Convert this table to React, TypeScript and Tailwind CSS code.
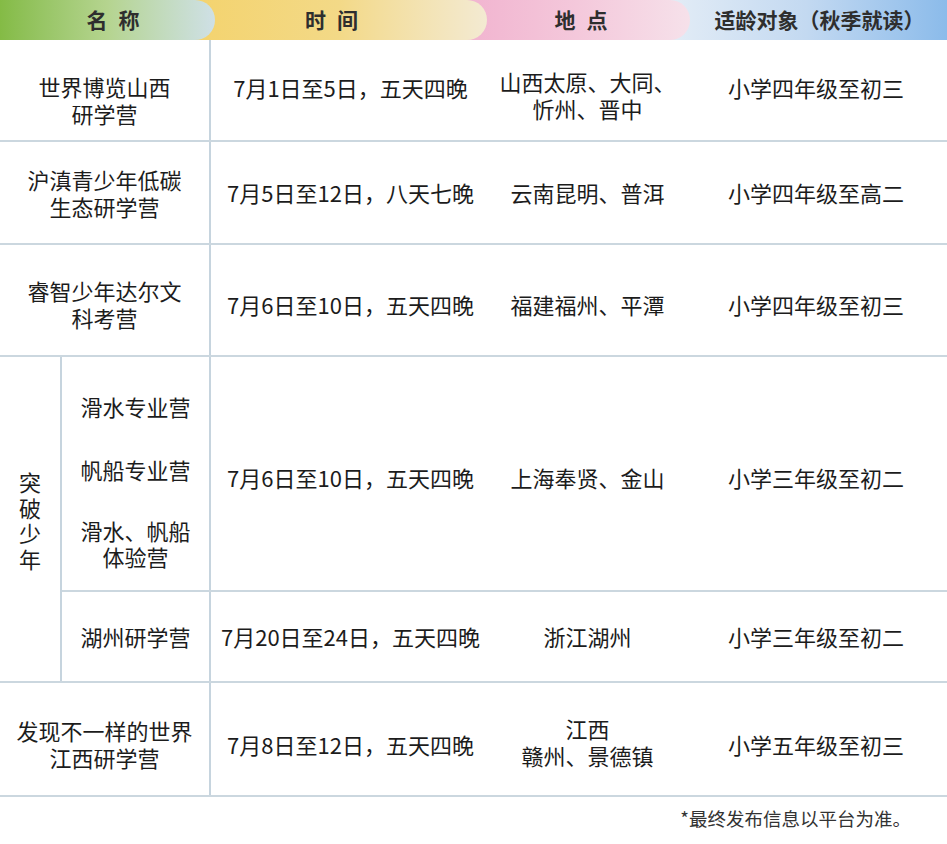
const rows = [
  {
    name: ["世界博览山西", "研学营"],
    time: "7月1日至5日，五天四晚",
    place: ["山西太原、大同、", "忻州、晋中"],
    age: "小学四年级至初三",
    h: "h-[102px]",
    pad: ["pt-[20px]", "pb-[6px]", "pt-[10px]", "pb-[6px]"],
  },
  {
    name: ["沪滇青少年低碳", "生态研学营"],
    time: "7月5日至12日，八天七晚",
    place: ["云南昆明、普洱"],
    age: "小学四年级至高二",
    h: "h-[103px]",
    pad: ["", "", "", ""],
  },
  {
    name: ["睿智少年达尔文", "科考营"],
    time: "7月6日至10日，五天四晚",
    place: ["福建福州、平潭"],
    age: "小学四年级至初三",
    h: "h-[112px]",
    pad: ["pt-[8px]", "pt-[8px]", "pt-[8px]", "pt-[8px]"],
  },
];

function Lines({ items }: { items: string[] }) {
  return (
    <div className="flex flex-col items-center leading-[27px]">
      {items.map((t) => (
        <span key={t}>{t}</span>
      ))}
    </div>
  );
}

function Rest({ time, place, age, pad = ["", "", ""] }: { time: string; place: string[]; age: string; pad?: string[] }) {
  return (
    <>
      <div className={`w-[279px] flex items-center justify-center ${pad[0]}`}>{time}</div>
      <div className={`w-[195px] flex items-center justify-center ${pad[1]}`}>
        <Lines items={place} />
      </div>
      <div className={`flex-1 flex items-center justify-center ${pad[2]}`}>{age}</div>
    </>
  );
}

export default function App() {
  return (
    <div
      className="w-[947px] h-[844px] bg-white text-[#1c1c1c] text-[22px] overflow-hidden"
      style={{ fontFamily: '"Noto Sans CJK SC", "Noto Sans", sans-serif' }}
    >
      {/* header */}
      <div className="flex h-[40px] font-bold text-[21px] text-[#2e2e2e]">
        <div className="relative z-30 w-[215px] rounded-r-[22px] bg-gradient-to-r from-[#84bb45] via-[#b5d48f] to-[#cfe0e6] flex items-center justify-center pl-[22px] tracking-[11px]">
          名称
        </div>
        <div className="relative z-20 -ml-[24px] w-[296px] rounded-r-[22px] bg-gradient-to-r from-[#f4d36d] via-[#f3d987] to-[#f3ead2] flex items-center justify-center pr-[4px] tracking-[11px]">
          时间
        </div>
        <div className="relative z-10 -ml-[24px] w-[227px] rounded-r-[22px] bg-gradient-to-r from-[#f1b3cf] via-[#f4c8db] to-[#f6e1ea] flex items-center justify-center pl-[20px] tracking-[11px]">
          地点
        </div>
        <div className="relative -ml-[24px] flex-1 bg-gradient-to-r from-[#e4edf6] via-[#c3d9f1] to-[#8bbbea] flex items-center justify-center pl-[26px]">
          适龄对象（秋季就读）
        </div>
      </div>

      {rows.map((r) => (
        <div key={r.time} className={`flex border-b-2 border-[#cbd7df] ${r.h}`}>
          <div className={`w-[211px] border-r-2 border-[#c6d4de] flex items-center justify-center ${r.pad[0]}`}>
            <Lines items={r.name} />
          </div>
          <Rest time={r.time} place={r.place} age={r.age} pad={r.pad.slice(1)} />
        </div>
      ))}

      {/* group row */}
      <div className="flex border-b-2 border-[#cbd7df]">
        <div className="w-[62px] border-r-2 border-[#c6d4de] flex items-center justify-center">
          <div className="flex flex-col items-center leading-[25.5px] pt-[2px]">
            <span>突</span>
            <span>破</span>
            <span>少</span>
            <span>年</span>
          </div>
        </div>
        <div className="flex-1 flex flex-col">
          <div className="flex h-[235px] border-b-2 border-[#cbd7df]">
            <div className="w-[149px] border-r-2 border-[#c6d4de] flex flex-col items-center pt-[35px]">
              <span className="leading-[28px]">滑水专业营</span>
              <span className="leading-[28px] mt-[35px]">帆船专业营</span>
              <div className="mt-[34px] flex flex-col items-center leading-[26px]">
                <span>滑水、帆船</span>
                <span>体验营</span>
              </div>
            </div>
            <Rest
              time="7月6日至10日，五天四晚"
              place={["上海奉贤、金山"]}
              age="小学三年级至初二"
              pad={["pt-[8px]", "pt-[8px]", "pt-[8px]"]}
            />
          </div>
          <div className="flex h-[89px]">
            <div className="w-[149px] border-r-2 border-[#c6d4de] flex items-center justify-center">湖州研学营</div>
            <Rest time="7月20日至24日，五天四晚" place={["浙江湖州"]} age="小学三年级至初二" />
          </div>
        </div>
      </div>

      <div className="flex h-[114px] border-b-2 border-[#cbd7df]">
        <div className="w-[211px] border-r-2 border-[#c6d4de] flex items-center justify-center pt-[10px]">
          <Lines items={["发现不一样的世界", "江西研学营"]} />
        </div>
        <Rest
          time="7月8日至12日，五天四晚"
          place={["江西", "赣州、景德镇"]}
          age="小学五年级至初三"
          pad={["pt-[10px]", "pt-[6px]", "pt-[10px]"]}
        />
      </div>

      <div className="flex justify-end pr-[36px] pt-[8px] text-[18.5px] text-[#333]">
        *最终发布信息以平台为准。
      </div>
    </div>
  );
}
